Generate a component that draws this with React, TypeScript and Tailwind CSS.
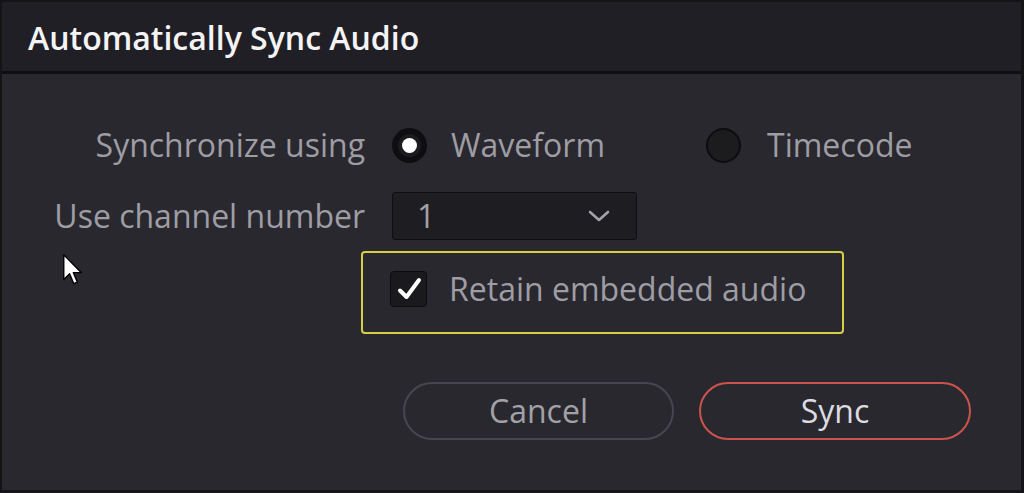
import React from "react";

function Cursor() {
  return (
    <svg
      className="absolute left-[61px] top-[252px]"
      width="20"
      height="31"
      viewBox="0 0 13 20"
    >
      <path
        d="M0.5 0.5 L0.5 16.5 L4.3 12.8 L7 19.2 L9.3 18.2 L6.7 12 L11.8 12 Z"
        fill="#ffffff"
        stroke="#000000"
        strokeWidth="0.9"
        strokeLinejoin="round"
      />
    </svg>
  );
}

export default function App() {
  return (
    <div
      className="relative w-[1024px] h-[493px] overflow-hidden bg-[#121215] border-l-2 border-t-2 border-r-[3px] border-b-[3px] border-[#141417] flex flex-col"
      style={{ fontFamily: '"Open Sans", "Noto Sans", sans-serif' }}
    >
      {/* Title bar */}
      <div className="h-[69px] bg-[#211f26] flex items-center pl-[26px] pt-[3px] shrink-0">
        <span className="text-[32px] font-semibold text-[#f4f4f6] leading-none">
          Automatically Sync Audio
        </span>
      </div>
      <div className="h-[3px] bg-[#0f0f12] shrink-0" />

      {/* Body */}
      <div className="flex-1 bg-[#29282f] flex flex-col text-[32px] text-[#9e9da4]">
        {/* Row 1 */}
        <div className="mt-[47px] h-[48px] flex items-center">
          <div className="w-[363px] text-right leading-none whitespace-nowrap">Synchronize using</div>
          <div className="ml-[27px] w-[314px] flex items-center">
            <div className="w-[35px] h-[35px] rounded-full bg-[#0e0e10] flex items-center justify-center">
              <div className="w-[23px] h-[23px] rounded-full bg-[#1b1a1f] flex items-center justify-center">
                <div className="w-[15px] h-[15px] rounded-full bg-white" />
              </div>
            </div>
            <span className="ml-[24px] leading-none">Waveform</span>
          </div>
          <div className="flex items-center">
            <div className="w-[35px] h-[35px] rounded-full bg-[#1c1c1f] border-2 border-[#0d0d0f]" />
            <span className="ml-[26px] leading-none">Timecode</span>
          </div>
        </div>

        {/* Row 2 */}
        <div className="mt-[23px] h-[48px] flex items-center">
          <div className="w-[363px] text-right leading-none whitespace-nowrap">Use channel number</div>
          <div className="ml-[27px] w-[245px] h-[48px] rounded-[3px] bg-[#1e1d22] border border-[#0e0e10] flex items-center justify-between pl-[24px] pr-[26px]">
            <span className="leading-none text-[#a3a2a8]">1</span>
            <svg width="22" height="14" viewBox="0 0 22 14">
              <path d="M2 3 L11 11 L20 3" fill="none" stroke="#a3a2a8" strokeWidth="2.6" strokeLinecap="round" strokeLinejoin="round" />
            </svg>
          </div>
        </div>

        {/* Checkbox group */}
        <div className="mt-[11px] ml-[359px] w-[483px] h-[83px] rounded-[4px] border-2 border-[#d6cf43] flex items-center pl-[27px] pb-[8px]">
          <div className="w-[37px] h-[36px] rounded-[4px] bg-[#1a191d] border border-[#0c0c0e] flex items-center justify-center">
            <svg width="28" height="28" viewBox="0 0 28 28">
              <path d="M5 15.5 L11.5 22 L24 5" fill="none" stroke="#ffffff" strokeWidth="4" strokeLinecap="round" strokeLinejoin="round" />
            </svg>
          </div>
          <span className="ml-[22px] leading-none">Retain embedded audio</span>
        </div>

        {/* Buttons */}
        <div className="mt-[48px] ml-[401px] flex gap-[25px]">
          <button className="w-[271px] h-[58px] rounded-full border-2 border-[#47464e] bg-transparent text-[32px] text-[#a2a1a7] leading-none flex items-center justify-center">
            Cancel
          </button>
          <button className="w-[272px] h-[58px] rounded-full border-[2.5px] border-[#cc534d] bg-transparent text-[32px] text-[#dcdce0] leading-none flex items-center justify-center">
            Sync
          </button>
        </div>
      </div>

      <Cursor />
    </div>
  );
}
